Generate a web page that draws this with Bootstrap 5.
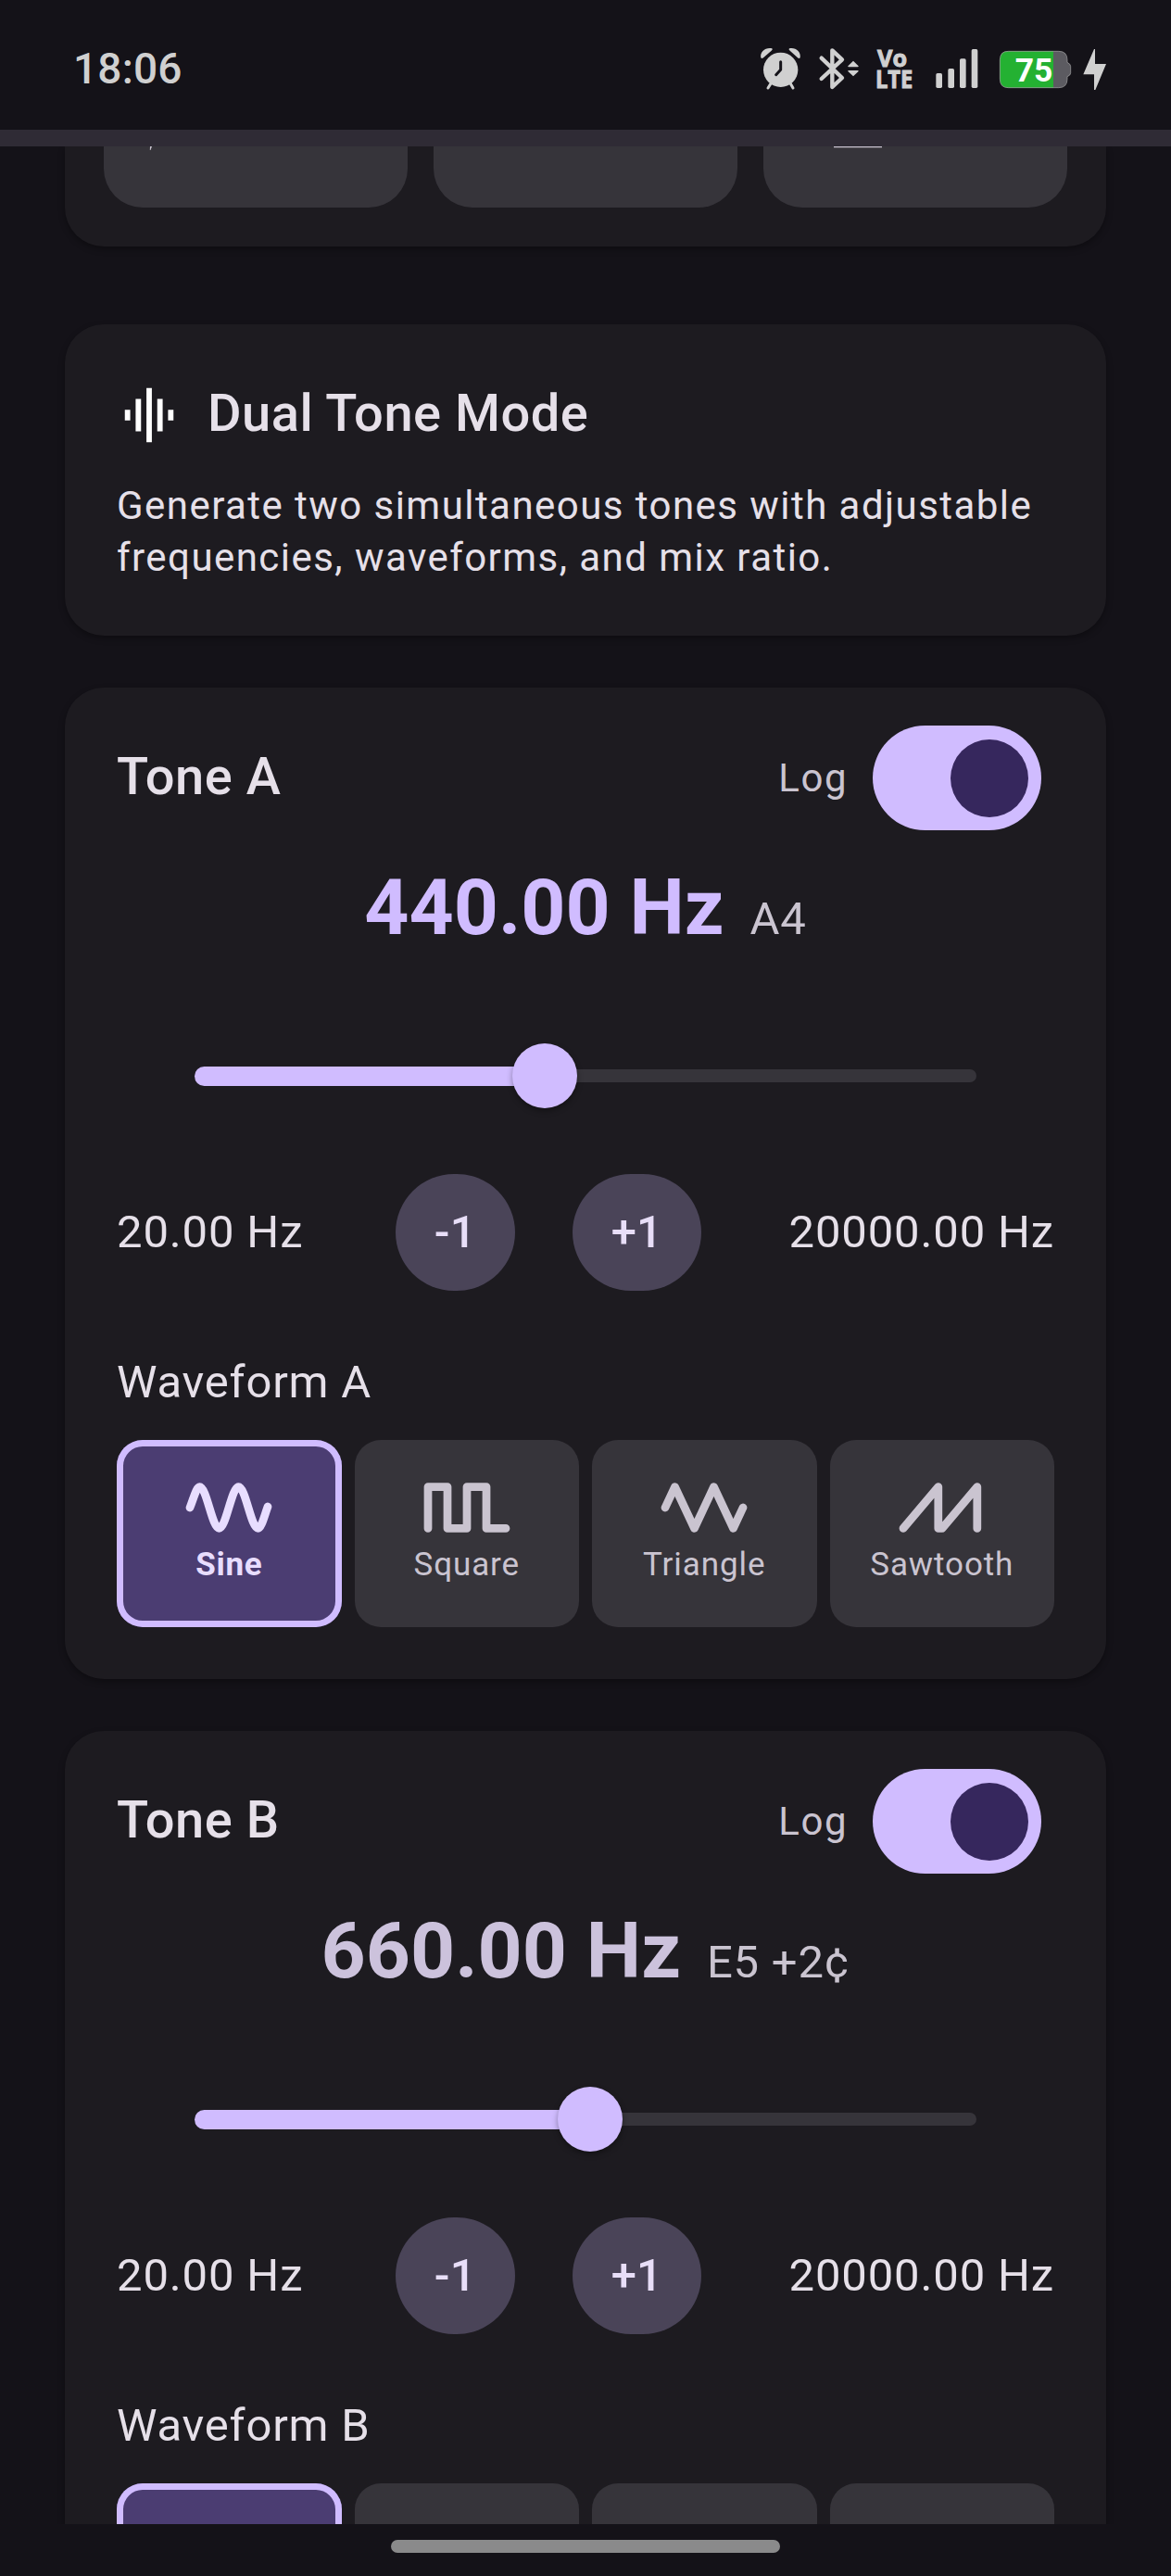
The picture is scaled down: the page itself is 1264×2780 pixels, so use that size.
<!DOCTYPE html>
<html lang="en" data-bs-theme="dark">
<head>
<meta charset="utf-8">
<meta name="viewport" content="width=device-width, initial-scale=1">
<title>Dual Tone Mode</title>
<link href="https://cdn.jsdelivr.net/npm/bootstrap@5.3.0/dist/css/bootstrap.min.css" rel="stylesheet">
<style>
  :root {
    --surface: #141218; --panel: #1d1b20; --tile: #36343a; --on: #e6e0e9;
    --muted: #cac4d0; --primary: #d0bcff; --selected: #4b3d72; --action: #4a4458;
  }
  body { background: var(--surface); color: var(--on); font-family: Roboto, sans-serif; width: 1264px; height: 2780px; overflow: hidden; }
  .statusbar { height: 140px; padding: 0 69px 0 79px; color: #d0d0d0; }
  .clock { font-size: 46px; font-weight: 500; line-height: 60px; letter-spacing: .2px; margin-top: 44px; }
  .status-icons { margin-top: 50px; }
  .status-icons svg { height: 50px; display: block; fill: currentColor; overflow: visible; }
  .divider { height: 18px; background: #2f2b35; }
  .viewport { height: 2566px; overflow: hidden; padding: 0 70px; }
  .panel { --bs-card-bg: var(--panel); --bs-card-color: var(--on); --bs-card-border-width: 0; --bs-card-border-radius: 42px; color: var(--on); box-shadow: 0 3px 7px rgba(0,0,0,.32); }
  .panel-top { height: 108px; border-top-left-radius: 0; border-top-right-radius: 0; padding: 0 42px; margin-bottom: 84px; }
  .preset { height: 66px; background: var(--tile); border-radius: 0 0 42px 42px; }
  .preset svg { display: block; }
  .panel-intro { height: 336px; padding: 56px; margin-bottom: 56px; }
  .title-text { font-size: 56px; font-weight: 500; letter-spacing: .5px; line-height: 80px; margin: 0; color: var(--on); }
  .intro-head { height: 84px; margin-bottom: 28px; }
  .intro-head svg { margin-right: 28px; }
  .intro-text { font-size: 42px; line-height: 56px; letter-spacing: 1.45px; margin: 0; }
  .panel-tone { height: 1070px; padding: 41px 56px 0; margin-bottom: 56px; flex-shrink: 0; }
  .tone-head { height: 113px; padding-right: 14px; }
  .log-label { font-size: 42px; letter-spacing: 1.5px; color: var(--muted); margin-right: 27px; }
  .toggle { width: 182px; height: 112.5px; border-radius: 57px; background: var(--primary); padding-right: 14px; }
  .toggle-thumb { width: 84px; height: 84px; border-radius: 50%; background: #36275d; }
  .freq { height: 112px; margin-top: 28px; gap: 28px; line-height: 112px; }
  .freq-value { font-size: 84px; font-weight: 700; }
  .freq-note { font-size: 49px; letter-spacing: .8px; color: var(--muted); }
  .tone-a .freq-value { color: var(--primary); }
  .tone-b .freq-value { color: #ccc2dc; }
  .slider { height: 168px; margin: 41px 84px 0; }
  .slider-active { height: 21px; border-radius: 11px 0 0 11px; background: var(--primary); }
  .slider-rest { height: 14px; border-radius: 0 7px 7px 0; background: var(--tile); }
  .slider-thumb { width: 70px; height: 70px; border-radius: 50%; background: var(--primary); margin: 0 -35px; z-index: 1; box-shadow: 0 3px 6px rgba(0,0,0,.35); flex: none; }
  .range-row { margin-top: 22px; height: 126px; font-size: 49px; letter-spacing: .85px; }
  .range-row .btn-group-gap { gap: 62px; margin-left: 5px; }
  .step { --bs-btn-padding-x: 42px; --bs-btn-padding-y: 0; --bs-btn-font-size: 49px; --bs-btn-font-weight: 500; --bs-btn-border-width: 0; --bs-btn-border-radius: 63px; --bs-btn-color: #e8def8; --bs-btn-bg: var(--action); --bs-btn-hover-bg: var(--action); height: 126.5px; letter-spacing: .15px; }
  .wave-title { font-size: 49px; line-height: 70px; letter-spacing: .8px; margin: 64px 0 27px; font-weight: 400; color: var(--on); }
  .waves { gap: 14px; }
  .wave { flex: 1 1 0; height: 202px; border-radius: 28px; background: var(--tile); color: var(--muted); padding-top: 45px; }
  .wave.active { background: var(--selected); color: #e8ddff; box-shadow: inset 0 0 0 7px var(--primary); }
  .wave svg { width: 94px; height: 56px; fill: none; stroke: currentColor; stroke-width: 8.75; stroke-linecap: round; stroke-linejoin: round; flex: none; }
  .wave-name { font-size: 35px; line-height: 49px; letter-spacing: .9px; margin-top: 9px; }
  .wave.active .wave-name { font-weight: 700; letter-spacing: .7px; }
  .navbar-gesture { height: 56px; background: var(--surface); }
  .pill { width: 420px; height: 14px; border-radius: 7px; background: #8a8a8b; margin-top: 17px; }
</style>
</head>
<body>
<header class="statusbar d-flex justify-content-between align-items-start">
  <div class="clock">18:06</div>
  <div class="status-icons d-flex">
    <!-- alarm -->
    <svg viewBox="120 90 135 150" width="45">
      <circle cx="188" cy="166" r="56"/>
      <path d="M124 127C120 108 140 92 160 97Q164 100 158 104L132 127Q127 131 124 127ZM251 127C255 108 235 92 216 97Q212 100 218 104L243 127Q248 131 251 127Z"/>
      <path d="M157 209L147 225M219 209L228 225" stroke="currentColor" stroke-width="9" stroke-linecap="round"/>
      <path d="M188 140V166L173 182" fill="none" stroke="#141218" stroke-width="9" stroke-linecap="round" stroke-linejoin="round"/>
    </svg>
    <!-- bluetooth -->
    <svg viewBox="312 90 132 150" width="44" style="margin-left:19px">
      <path d="M320 128L387 192L355 222V103L387 133L320 195" fill="none" stroke="currentColor" stroke-width="13" stroke-linecap="round" stroke-linejoin="round"/>
      <path d="M423 137L440 154Q441 157 437 157H409Q404 157 406 154ZM423 187L440 171Q441 168 437 168H409Q404 168 406 171Z"/>
    </svg>
    <!-- VoLTE -->
    <svg viewBox="498 90 117 150" width="39" style="margin-left:18px" font-family="Open Sans, sans-serif" font-weight="700" stroke="currentColor" stroke-width="3">
      <text x="501" y="156" font-size="77" textLength="96" lengthAdjust="spacingAndGlyphs">Vo</text>
      <text x="495" y="225" font-size="78" textLength="121" lengthAdjust="spacingAndGlyphs">LTE</text>
    </svg>
    <!-- signal -->
    <svg viewBox="690 90 138 150" width="46" style="margin-left:25px">
      <rect x="691" y="177" width="20" height="48" rx="5"/><rect x="730" y="162" width="20" height="63" rx="5"/><rect x="768" y="130" width="20" height="95" rx="5"/><rect x="806" y="99" width="20" height="126" rx="5"/>
    </svg>
    <!-- battery -->
    <svg viewBox="894 90 236 150" width="78.7" style="margin-left:22px">
      <path d="M925 106H1088Q1116 106 1116 134V142Q1127 147 1127 155V176Q1127 184 1116 188V196Q1116 224 1088 224H925Q898 224 898 196V134Q898 106 925 106Z" fill="#5c5b61"/>
      <path d="M1071 106V224H925Q898 224 898 196V134Q898 106 925 106Z" fill="#24b132"/>
      <path d="M925 106H1088Q1116 106 1116 134V142Q1127 147 1127 155V176Q1127 184 1116 188V196Q1116 224 1088 224H925Q898 224 898 196V134Q898 106 925 106Z" fill="none" stroke="#aaa" stroke-opacity=".65" stroke-width="3"/>
      <text x="947" y="204" font-family="Roboto, sans-serif" font-weight="700" font-size="106" textLength="122" lengthAdjust="spacingAndGlyphs" fill="#fff">75</text>
    </svg>
    <!-- charging -->
    <svg viewBox="1167 90 78 150" width="26" style="margin-left:12.3px">
      <path d="M1206 99V147H1242L1207 231H1203V181H1168L1203 99Z"/>
    </svg>
  </div>
</header>
<div class="divider"></div>

<main class="viewport d-flex flex-column">
  <section class="card panel panel-top flex-shrink-0">
    <div class="row g-0 flex-nowrap" style="column-gap:28px">
      <div class="col preset"><svg width="328" height="6"><path d="M50 0h2l-1.5 4h-.7z" fill="#cac4d0"/></svg></div>
      <div class="col preset"></div>
      <div class="col preset"><svg width="328" height="6"><path d="M76 0h52v1.3h-52z" fill="#cac4d0"/></svg></div>
    </div>
  </section>

  <section class="card panel panel-intro flex-shrink-0">
    <div class="intro-head d-flex align-items-center">
      <svg width="70" height="70" viewBox="0 0 24 24" fill="#fff"><path d="M7 18h2V6H7v12zm4 4h2V2h-2v20zm-8-8h2v-4H3v4zm12 4h2V6h-2v12zm4-8v4h2v-4h-2z"/></svg>
      <h1 class="title-text pb-1">Dual Tone Mode</h1>
    </div>
    <p class="intro-text">Generate two simultaneous tones with adjustable<br>frequencies, waveforms, and mix ratio.</p>
  </section>

  <section class="card panel panel-tone tone-a">
    <div class="tone-head d-flex align-items-center">
      <h2 class="title-text me-auto pb-1">Tone A</h2>
      <span class="log-label">Log</span>
      <div class="toggle d-flex align-items-center justify-content-end"><div class="toggle-thumb"></div></div>
    </div>
    <div class="freq d-flex justify-content-center align-items-baseline">
      <span class="freq-value">440.00 Hz</span><span class="freq-note">A4</span>
    </div>
    <div class="slider d-flex align-items-center">
      <div class="slider-active" style="width:44.8%"></div><div class="slider-thumb"></div><div class="slider-rest flex-grow-1"></div>
    </div>
    <div class="range-row d-flex justify-content-between align-items-center">
      <span>20.00 Hz</span>
      <div class="btn-group-gap d-flex"><button class="btn step">-1</button><button class="btn step">+1</button></div>
      <span>20000.00 Hz</span>
    </div>
    <h3 class="wave-title">Waveform A</h3>
    <div class="waves d-flex">
      <div class="wave active d-flex flex-column align-items-center">
        <svg viewBox="-5 -28 94 56"><path d="M0 0C4-10 7-22.4 10.5-22.4C18-22.4 24 22.4 31.5 22.4S45-22.4 52.5-22.4S66 22.4 73.5 22.4C77 22.4 80 10 84-1"/></svg>
        <span class="wave-name">Sine</span>
      </div>
      <div class="wave d-flex flex-column align-items-center">
        <svg viewBox="-5 -28 94 56"><path d="M0 22.4V-22.4H21V22.4H42V-22.4H63V22.4H84"/></svg>
        <span class="wave-name">Square</span>
      </div>
      <div class="wave d-flex flex-column align-items-center">
        <svg viewBox="-5 -28 94 56"><path d="M0 0L10.5-22.4L31.5 22.4L52.5-22.4L73.5 22.4L84 0"/></svg>
        <span class="wave-name">Triangle</span>
      </div>
      <div class="wave d-flex flex-column align-items-center">
        <svg viewBox="-5 -28 94 56"><path d="M0 22.4L37.8-22.4V22.4H42L79.8-22.4V22.4"/></svg>
        <span class="wave-name">Sawtooth</span>
      </div>
    </div>
  </section>

  <section class="card panel panel-tone tone-b">
    <div class="tone-head d-flex align-items-center">
      <h2 class="title-text me-auto pb-1">Tone B</h2>
      <span class="log-label">Log</span>
      <div class="toggle d-flex align-items-center justify-content-end"><div class="toggle-thumb"></div></div>
    </div>
    <div class="freq d-flex justify-content-center align-items-baseline">
      <span class="freq-value">660.00 Hz</span><span class="freq-note">E5 +2¢</span>
    </div>
    <div class="slider d-flex align-items-center">
      <div class="slider-active" style="width:50.65%"></div><div class="slider-thumb"></div><div class="slider-rest flex-grow-1"></div>
    </div>
    <div class="range-row d-flex justify-content-between align-items-center">
      <span>20.00 Hz</span>
      <div class="btn-group-gap d-flex"><button class="btn step">-1</button><button class="btn step">+1</button></div>
      <span>20000.00 Hz</span>
    </div>
    <h3 class="wave-title">Waveform B</h3>
    <div class="waves d-flex">
      <div class="wave active"></div>
      <div class="wave"></div>
      <div class="wave"></div>
      <div class="wave"></div>
    </div>
  </section>
</main>
<footer class="navbar-gesture d-flex justify-content-center"><div class="pill"></div></footer>
<script src="https://cdn.jsdelivr.net/npm/bootstrap@5.3.0/dist/js/bootstrap.bundle.min.js"></script>
</body>
</html>
